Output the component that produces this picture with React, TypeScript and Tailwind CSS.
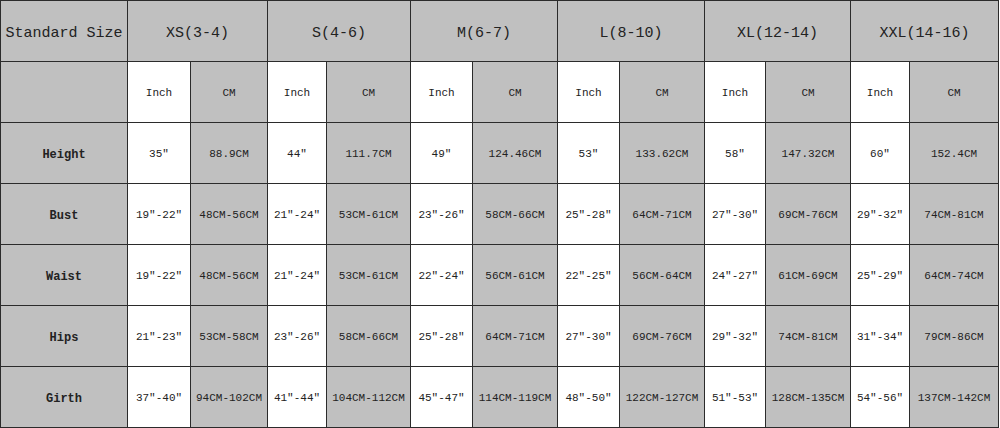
import React from "react";

const sizes = ["XS(3-4)", "S(4-6)", "M(6-7)", "L(8-10)", "XL(12-14)", "XXL(14-16)"];

const rows: { label: string; values: string[] }[] = [
  { label: "Height", values: ["35″", "88.9CM", "44″", "111.7CM", "49″", "124.46CM", "53″", "133.62CM", "58″", "147.32CM", "60″", "152.4CM"] },
  { label: "Bust", values: ["19″-22″", "48CM-56CM", "21″-24″", "53CM-61CM", "23″-26″", "58CM-66CM", "25″-28″", "64CM-71CM", "27″-30″", "69CM-76CM", "29″-32″", "74CM-81CM"] },
  { label: "Waist", values: ["19″-22″", "48CM-56CM", "21″-24″", "53CM-61CM", "22″-24″", "56CM-61CM", "22″-25″", "56CM-64CM", "24″-27″", "61CM-69CM", "25″-29″", "64CM-74CM"] },
  { label: "Hips", values: ["21″-23″", "53CM-58CM", "23″-26″", "58CM-66CM", "25″-28″", "64CM-71CM", "27″-30″", "69CM-76CM", "29″-32″", "74CM-81CM", "31″-34″", "79CM-86CM"] },
  { label: "Girth", values: ["37″-40″", "94CM-102CM", "41″-44″", "104CM-112CM", "45″-47″", "114CM-119CM", "48″-50″", "122CM-127CM", "51″-53″", "128CM-135CM", "54″-56″", "137CM-142CM"] },
];

export default function App() {
  const cell = "flex items-center justify-center text-[#222] whitespace-nowrap";

  return (
    <div className="bg-white w-[1000px] h-[428px] font-['Liberation_Mono',monospace]">
      <div className="grid w-[999px] h-[428px] gap-px p-px bg-[#2b2b2b] grid-cols-[126px_62px_76px_58px_83px_61px_84px_61px_84px_60px_84px_58px_88px] grid-rows-[repeat(7,60px)]">
        {/* size header row */}
        <div className={`${cell} pt-[6px] bg-[#c0c0c0] text-[15px] text-[#111]`}>Standard Size</div>
        {sizes.map((s) => (
          <div key={s} className={`${cell} pt-[6px] col-span-2 bg-[#c0c0c0] text-[15px] text-[#111]`}>
            {s}
          </div>
        ))}

        {/* unit row */}
        <div className="bg-[#c0c0c0]" />
        {sizes.map((s) => (
          <React.Fragment key={s}>
            <div className={`${cell} pt-[2px] bg-white text-[11px]`}>Inch</div>
            <div className={`${cell} pt-[2px] bg-[#c0c0c0] text-[11px]`}>CM</div>
          </React.Fragment>
        ))}

        {rows.map((r) => (
          <React.Fragment key={r.label}>
            <div className={`${cell} pt-[3px] bg-[#c0c0c0] text-[12px] font-bold text-[#111]`}>{r.label}</div>
            {r.values.map((v, i) => (
              <div
                key={i}
                className={`${cell} pt-[3px] text-[11px] ${i % 2 === 0 ? "bg-white" : "bg-[#c0c0c0]"}`}
              >
                {v}
              </div>
            ))}
          </React.Fragment>
        ))}
      </div>
    </div>
  );
}
